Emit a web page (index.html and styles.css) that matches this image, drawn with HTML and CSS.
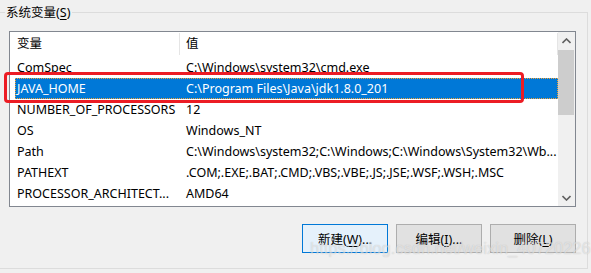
FILE: index.html
```html
<!DOCTYPE html>
<html lang="zh-CN">
<head>
    <meta charset="UTF-8">
    <title>系统变量</title>
    <link rel="stylesheet" href="styles.css">
</head>
<body>

<div class="group">
    <div class="group-title">系统变量(<u>S</u>)</div>

    <div class="listbox">
        <div class="list">
            <div class="list-head">
                <span class="col-name">变量</span>
                <span class="col-value">值</span>
            </div>
            <div class="row">
                <span class="col-name">ComSpec</span>
                <span class="col-value">C:\Windows\system32\cmd.exe</span>
            </div>
            <div class="row selected">
                <span class="col-name">JAVA_HOME</span>
                <span class="col-value">C:\Program Files\Java\jdk1.8.0_201</span>
            </div>
            <div class="row">
                <span class="col-name">NUMBER_OF_PROCESSORS</span>
                <span class="col-value">12</span>
            </div>
            <div class="row">
                <span class="col-name">OS</span>
                <span class="col-value">Windows_NT</span>
            </div>
            <div class="row">
                <span class="col-name">Path</span>
                <span class="col-value">C:\Windows\system32;C:\Windows;C:\Windows\System32\Wb...</span>
            </div>
            <div class="row">
                <span class="col-name">PATHEXT</span>
                <span class="col-value">.COM;.EXE;.BAT;.CMD;.VBS;.VBE;.JS;.JSE;.WSF;.WSH;.MSC</span>
            </div>
            <div class="row">
                <span class="col-name">PROCESSOR_ARCHITECT...</span>
                <span class="col-value">AMD64</span>
            </div>
        </div>

        <div class="scrollbar">
            <div class="sb-btn">
                <svg width="9" height="6" viewBox="0 0 9 6"><path d="M0.5 5 L4.5 1 L8.5 5" fill="none" stroke="#606060" stroke-width="1.6"/></svg>
            </div>
            <div class="sb-thumb"></div>
            <div class="sb-track"></div>
            <div class="sb-btn">
                <svg width="9" height="6" viewBox="0 0 9 6"><path d="M0.5 1 L4.5 5 L8.5 1" fill="none" stroke="#606060" stroke-width="1.6"/></svg>
            </div>
        </div>
    </div>

    <div class="buttons">
        <button class="btn default">新建(<u>W</u>)...</button>
        <button class="btn">编辑(<u>I</u>)...</button>
        <button class="btn">删除(<u>L</u>)</button>
    </div>
</div>

<!-- annotation drawn over the screenshot -->
<div class="mark"></div>
<div class="watermark">https://blog.csdn.net/weixin_40720226</div>

</body>
</html>
```

FILE: styles.css
```css
body {
    margin: 0;
    background-color: #f0f0f0;
    font-family: "Noto Sans", "Noto Sans CJK SC", sans-serif;
    font-size: 12.5px;
    color: #000;
    width: 591px;
    height: 273px;
    overflow: hidden;
    position: relative;
}
u {
    text-decoration-thickness: 1px;
    text-underline-offset: 2px;
}
.group {
    box-sizing: border-box;
    display: flex;
    flex-direction: column;
    margin: 12px 0 0 -1px;
    width: 589px;
    height: 257px;
    border: 1px solid #dcdcdc;
}
.group-title {
    align-self: flex-start;
    margin: -9px 0 0 5px;
    padding: 0 2px 0 1px;
    height: 17px;
    line-height: 17px;
    background-color: #f0f0f0;
}
.listbox {
    box-sizing: border-box;
    display: flex;
    margin: 10px 0 0 9px;
    width: 567px;
    height: 176px;
    border: 1px solid #828790;
    background-color: #fff;
}
.list {
    flex: 1;
    padding-left: 5px;
    overflow: hidden;
}
.list-head, .row {
    display: flex;
    white-space: nowrap;
}
.list-head {
    height: 25px;
    align-items: flex-start;
}
.list-head span {
    box-sizing: border-box;
    height: 22px;
    margin-top: 1px;
    line-height: 22px;
    border-right: 1px solid #e5e5e5;
}
.row {
    height: 21px;
    line-height: 21px;
}
.col-name {
    box-sizing: border-box;
    width: 165px;
    padding-left: 2px;
    overflow: hidden;
}
.col-value {
    flex: 1;
    padding-left: 6px;
    overflow: hidden;
}
.row.selected {
    background-color: #0078d7;
    color: #fff;
    outline: 1px dotted #f2a33a;
    outline-offset: -1px;
}
.scrollbar {
    width: 17px;
    display: flex;
    flex-direction: column;
    background-color: #f0f0f0;
}
.sb-btn {
    height: 17px;
    display: flex;
    align-items: center;
    justify-content: center;
}
.sb-thumb {
    height: 65px;
    margin: 1px 1px 0 0;
    background-color: #cdcdcd;
}
.sb-track {
    flex: 1;
}
.buttons {
    display: flex;
    justify-content: flex-end;
    gap: 8px;
    margin: 17px 0 0 9px;
    width: 567px;
}
.btn {
    box-sizing: border-box;
    width: 86px;
    height: 29px;
    padding: 0;
    font: inherit;
    color: #000;
    border: 1px solid #adadad;
    background-color: #e1e1e1;
}
.btn.default {
    border-color: #0078d7;
    background-color: #e5f1fb;
}
.mark {
    position: absolute;
    left: 4px;
    top: 72px;
    box-sizing: border-box;
    width: 520px;
    height: 31px;
    border: 3px solid #ec1c24;
    border-radius: 4px;
}
.watermark {
    position: absolute;
    left: 310px;
    top: 239px;
    font-family: "Liberation Sans", sans-serif;
    font-size: 16.5px;
    color: rgba(255, 255, 255, 0.5);
    text-shadow: 0 0 1px rgba(120, 120, 120, 0.4);
    white-space: nowrap;
}
```
